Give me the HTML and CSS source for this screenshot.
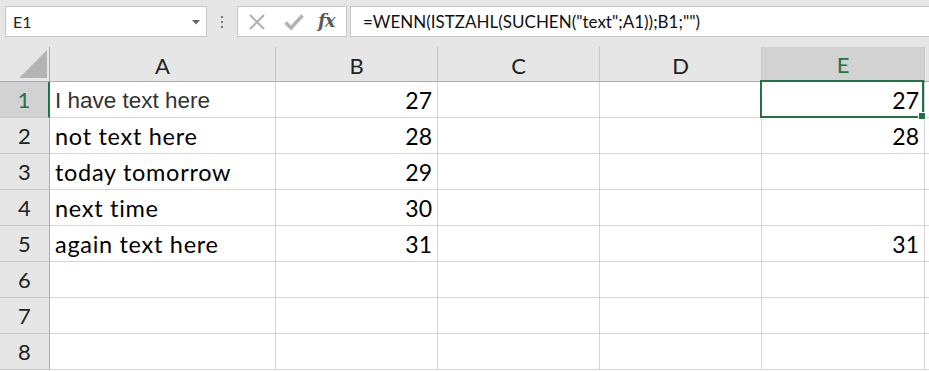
FILE: index.html
```html
<!DOCTYPE html>
<html>
<head>
<meta charset="utf-8">
<link rel="stylesheet" href="styles.css">
</head>
<body>
<div class="app">
  <div class="toolbar">
    <div class="namebox">
      <span class="ref">E1</span>
      <svg class="dd" width="8" height="5" viewBox="0 0 8 5"><path d="M0 0 H8 L4 4.5 Z" fill="#666"/></svg>
    </div>
    <div class="dots"><i></i><i></i><i></i></div>
    <div class="fxbox">
      <svg class="ico" width="18" height="18" viewBox="0 0 18 18"><path d="M2 2 L16 16 M16 2 L2 16" stroke="#b3b3b3" stroke-width="2.2" fill="none"/></svg>
      <svg class="ico" width="20" height="18" viewBox="0 0 20 18"><path d="M1.5 9.5 L7 15 L18.5 2.5" stroke="#b3b3b3" stroke-width="3.4" fill="none"/></svg>
      <span class="fx">fx</span>
    </div>
    <div class="formula">=WENN(ISTZAHL(SUCHEN("text";A1));B1;"")</div>
  </div>
  <div class="sheet">
    <div class="h corner"><svg width="28" height="28" viewBox="0 0 28 28"><path d="M28 0 V28 H0 Z" fill="#b4b4b4"/></svg></div>
    <div class="h col">A</div>
    <div class="h col">B</div>
    <div class="h col">C</div>
    <div class="h col">D</div>
    <div class="h col sel">E</div>
    <div class="h col rest"></div>

    <div class="h row sel">1</div>
    <div class="c t dim">I have text here</div>
    <div class="c n">27</div>
    <div class="c"></div>
    <div class="c"></div>
    <div class="c n active">27</div>
    <div class="c rest"></div>

    <div class="h row">2</div>
    <div class="c t">not text here</div>
    <div class="c n">28</div>
    <div class="c"></div>
    <div class="c"></div>
    <div class="c n">28</div>
    <div class="c rest"></div>

    <div class="h row">3</div>
    <div class="c t">today tomorrow</div>
    <div class="c n">29</div>
    <div class="c"></div>
    <div class="c"></div>
    <div class="c n"></div>
    <div class="c rest"></div>

    <div class="h row">4</div>
    <div class="c t">next time</div>
    <div class="c n">30</div>
    <div class="c"></div>
    <div class="c"></div>
    <div class="c n"></div>
    <div class="c rest"></div>

    <div class="h row">5</div>
    <div class="c t">again text here</div>
    <div class="c n">31</div>
    <div class="c"></div>
    <div class="c"></div>
    <div class="c n">31</div>
    <div class="c rest"></div>

    <div class="h row">6</div>
    <div class="c"></div><div class="c"></div><div class="c"></div><div class="c"></div><div class="c"></div><div class="c rest"></div>

    <div class="h row">7</div>
    <div class="c"></div><div class="c"></div><div class="c"></div><div class="c"></div><div class="c"></div><div class="c rest"></div>

    <div class="h row">8</div>
    <div class="c"></div><div class="c"></div><div class="c"></div><div class="c"></div><div class="c"></div><div class="c rest"></div>
  </div>
</div>
</body>
</html>
```
FILE: styles.css
```css
* { box-sizing: border-box; }
html, body { margin: 0; padding: 0; background: #fff; overflow: hidden; }
body { width: 929px; height: 371px; font-family: Lato, "Open Sans", sans-serif; }

.toolbar {
  height: 47px;
  background: #e6e6e6;
  display: flex;
  align-items: flex-start;
  padding: 6px 0 0 5px;
}
.namebox {
  width: 202px;
  height: 31px;
  background: #fff;
  border: 1px solid #c6c6c6;
  display: flex;
  align-items: center;
  justify-content: space-between;
  padding: 0 6px 0 7px;
  font-size: 16px;
  color: #222;
}
.namebox .dd { margin-top: 1px; }
.dots {
  width: 30px;
  height: 31px;
  display: flex;
  flex-direction: column;
  align-items: center;
  justify-content: center;
  gap: 3px;
}
.dots i { width: 2px; height: 2px; background: #777; display: block; }
.fxbox {
  width: 110px;
  height: 31px;
  background: #fff;
  border: 1px solid #c6c6c6;
  display: flex;
  align-items: center;
  padding-left: 10px;
  gap: 0;
}
.fxbox .ico:first-child { margin-right: 18px; }
.fxbox .ico:nth-child(2) { margin-right: 14px; }
.fx {
  font-family: "DejaVu Serif", serif;
  font-style: italic;
  font-weight: bold;
  font-size: 18px;
  color: #5a5a5a;
  letter-spacing: -1px;
  margin-top: -2px;
}
.formula {
  margin-left: 3px;
  flex: 1;
  height: 31px;
  background: #fff;
  border: 1px solid #c6c6c6;
  border-right: none;
  display: flex;
  align-items: center;
  padding-left: 12px;
  font-size: 17px;
  color: #111;
}

.sheet {
  display: grid;
  grid-template-columns: 50px 226px 162px 162px 162px 163px 1fr;
  grid-template-rows: 35px repeat(8, 36px);
}
.h {
  background: #e6e6e6;
  color: #222;
  font-size: 22px;
  display: flex;
  align-items: center;
  justify-content: center;
}
.col { border-right: 1px solid #c8c8c8; border-bottom: 1px solid #ababab; padding-top: 2px; }
.col.rest { border-right: none; }
.corner {
  border-right: 1px solid #ababab;
  border-bottom: 1px solid #ababab;
  align-items: flex-end;
  justify-content: flex-end;
  padding: 0 2px 3px 0;
}
.row { border-right: 1px solid #ababab; border-bottom: 1px solid #c8c8c8; }
.h.sel { background: #d2d2d2; color: #217346; }
.col.sel { border-bottom: 2px solid #217346; }
.row.sel { border-right: 2px solid #217346; }

.c {
  border-right: 1px solid #d4d4d4;
  border-bottom: 1px solid #d4d4d4;
  font-size: 23px;
  color: #000;
  display: flex;
  align-items: flex-end;
  padding-bottom: 3px;
  white-space: nowrap;
}
.c.rest { border-right: none; }
.t { padding-left: 5px; font-size: 23.5px; letter-spacing: 0.7px; }
.t.dim {
  color: #333;
  font-family: "Liberation Sans", Arial, sans-serif;
  font-size: 22.5px;
  letter-spacing: 0;
  padding-bottom: 3px;
}
.n { justify-content: flex-end; padding-right: 5px; }
.active { position: relative; }
.active::after {
  content: "";
  position: absolute;
  left: -2px; top: -2px; right: 0; bottom: -1px;
  border: 2px solid #217346;
}
.active::before {
  content: "";
  position: absolute;
  right: -2px; bottom: -3px;
  width: 6px; height: 6px;
  background: #217346;
  border: 1px solid #fff;
  z-index: 2;
}
```
